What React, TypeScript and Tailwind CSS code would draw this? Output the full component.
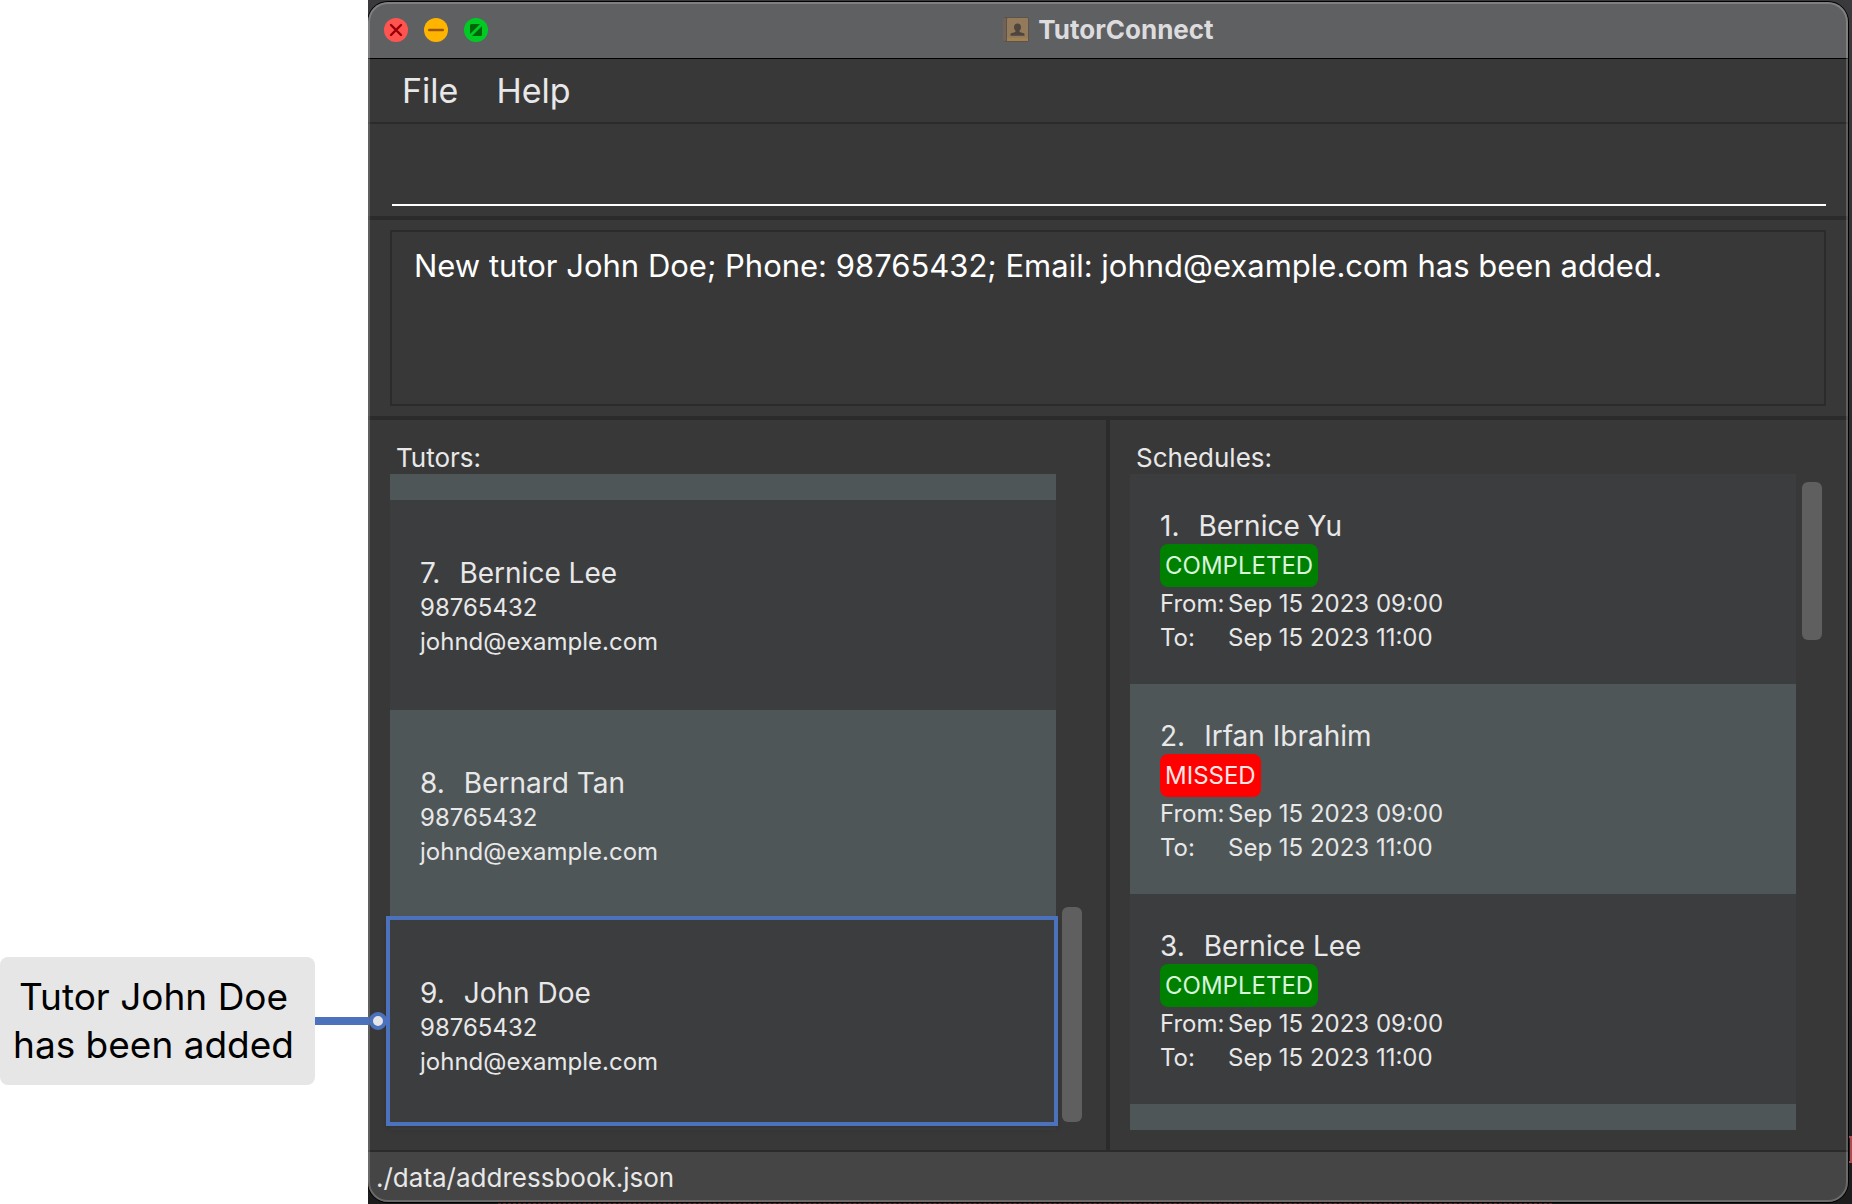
import React from "react";

type Tutor = { id: number; name: string; phone: string; email: string };
type Schedule = { id: number; name: string; status: "COMPLETED" | "MISSED"; from: string; to: string };

const tutors: Tutor[] = [
  { id: 7, name: "Bernice Lee", phone: "98765432", email: "johnd@example.com" },
  { id: 8, name: "Bernard Tan", phone: "98765432", email: "johnd@example.com" },
  { id: 9, name: "John Doe", phone: "98765432", email: "johnd@example.com" },
];

const schedules: Schedule[] = [
  { id: 1, name: "Bernice Yu", status: "COMPLETED", from: "Sep 15 2023 09:00", to: "Sep 15 2023 11:00" },
  { id: 2, name: "Irfan Ibrahim", status: "MISSED", from: "Sep 15 2023 09:00", to: "Sep 15 2023 11:00" },
  { id: 3, name: "Bernice Lee", status: "COMPLETED", from: "Sep 15 2023 09:00", to: "Sep 15 2023 11:00" },
];

function TitleBar() {
  return (
    <header className="grid h-[57px] shrink-0 grid-cols-[1fr_auto_1fr] items-center border-b border-black bg-[#5f6062]">
      <div className="flex gap-4 pl-4">
        <button aria-label="Close" className="size-6">
          <svg viewBox="0 0 24 24" className="size-6">
            <circle cx="12" cy="12" r="12" fill="#ff5450" />
            <path d="M7 7l10 10M17 7L7 17" stroke="#990006" strokeWidth="2.4" strokeLinecap="round" />
          </svg>
        </button>
        <button aria-label="Minimize" className="size-6">
          <svg viewBox="0 0 24 24" className="size-6">
            <circle cx="12" cy="12" r="12" fill="#ffb400" />
            <path d="M5.2 12h13.6" stroke="#9a5700" strokeWidth="2.6" strokeLinecap="round" />
          </svg>
        </button>
        <button aria-label="Zoom" className="size-6">
          <svg viewBox="0 0 24 24" className="size-6">
            <circle cx="12" cy="12" r="12" fill="#00cb25" />
            <path d="M6 16V7.5A1.5 1.5 0 0 1 7.500 6H16zM18 8v8.500A1.500 1.500 0 0 1 16.500 18H8z" fill="#006408" />
          </svg>
        </button>
      </div>
      <div className="flex items-center gap-2">
        <svg viewBox="0 0 28 28" className="size-7">
          <rect x="1" y="1" width="26" height="25" rx="2" fill="#5c5349" />
          <rect x="1" y="2" width="3" height="23" rx="1" fill="#71635a" />
          <rect x="5" y="2" width="21" height="23" rx="1" fill="#937a5b" />
          <rect x="5" y="22" width="21" height="3" fill="#a08252" />
          <path
            d="M15.500 7.500c2.200 0 3.500 1.600 3.500 3.700 0 1.400-.6 2.600-1.400 3.400v1.300l4.200 1.300c.5.200.7.600.7 1v1.500h-14v-1.500c0-.4.200-.8.700-1l4.200-1.300v-1.300c-.8-.8-1.400-2-1.400-3.400 0-2.100 1.300-3.700 3.500-3.700z"
            fill="#4e463e"
          />
        </svg>
        <h1 className="text-[26px] font-bold text-[#dcdcde]">TutorConnect</h1>
      </div>
    </header>
  );
}

function Row({ shaded, children }: { shaded: boolean; children: React.ReactNode }) {
  return (
    <li
      className={
        shaded
          ? "relative flex h-[210px] shrink-0 flex-col justify-center bg-[#4f5658] px-[30px] pt-1"
          : "relative flex h-[210px] shrink-0 flex-col justify-center bg-[#3c3d3f] px-[30px] pt-1"
      }
    >
      {children}
    </li>
  );
}

function Name({ id, name }: { id: number; name: string }) {
  return (
    <h3 className="flex gap-[19px] text-[28px] leading-9">
      <span>{id}.</span>
      <span>{name}</span>
    </h3>
  );
}

function TutorPanel() {
  return (
    <section className="flex min-w-0 flex-1 flex-col border-r-4 border-[#2b2b2b] py-5 pr-5 pl-[22px]">
      <h2 className="h-[34px] px-1.5 text-[26px] leading-9">Tutors:</h2>
      <div className="flex min-h-0 flex-1">
        <ul className="flex min-w-0 flex-1 flex-col">
          <li className="flex-1 bg-[#4f5658]" />
          {tutors.map((t) => (
            <Row key={t.id} shaded={t.id % 2 === 0}>
              <Name id={t.id} name={t.name} />
              <p>{t.phone}</p>
              <p>{t.email}</p>
              {t.id === 9 && (
                <div className="pointer-events-none absolute -top-1 -right-0.5 bottom-1 -left-1 border-4 border-[#4c72be] shadow-md" />
              )}
            </Row>
          ))}
        </ul>
        <div className="mr-1 ml-1.5 flex w-5 flex-col justify-end pb-2">
          <div className="h-[215px] rounded-md bg-[#5f5f5f]" />
        </div>
      </div>
    </section>
  );
}

function SchedulePanel() {
  return (
    <section className="flex min-w-0 flex-1 flex-col py-5 pr-[22px] pl-5">
      <h2 className="h-[34px] px-1.5 text-[26px] leading-9">Schedules:</h2>
      <div className="flex min-h-0 flex-1">
        <ul className="flex min-w-0 flex-1 flex-col">
          {schedules.map((s) => (
            <Row key={s.id} shaded={s.id % 2 === 0}>
              <Name id={s.id} name={s.name} />
              <span
                className={
                  s.status === "COMPLETED"
                    ? "self-start rounded-lg bg-[#008000] px-[5px] leading-[43px] text-[#d8f5dc]"
                    : "self-start rounded-lg bg-[#ff0000] px-[5px] leading-[43px] text-[#ffe6e6]"
                }
              >
                {s.status}
              </span>
              <dl className="grid grid-cols-[68px_auto] justify-start">
                <dt>From:</dt>
                <dd>{s.from}</dd>
                <dt>To:</dt>
                <dd>{s.to}</dd>
              </dl>
            </Row>
          ))}
          <li className="flex-1 bg-[#4f5658]" />
        </ul>
        <div className="mr-1 ml-1.5 w-5 pt-2">
          <div className="h-[158px] rounded-md bg-[#5f5f5f]" />
        </div>
      </div>
    </section>
  );
}

export default function App() {
  return (
    <div className="flex h-screen bg-white font-['Inter',sans-serif] text-[#e8e8e8]">
      <aside className="relative z-10 flex w-[368px] shrink-0 flex-col justify-end pb-[119px]">
        <div className="flex items-center">
          <p className="flex h-32 w-[315px] items-center justify-center rounded-lg bg-[#e6e6e6] pr-2 text-center text-[37px] leading-[48px] text-black">
            Tutor John Doe
            <br />
            has been added
          </p>
          <div className="h-2 flex-1 bg-[#4c72be]" />
          <div className="-mr-[19px] size-[18px] shrink-0 rounded-full border-4 border-[#4c72be] bg-[#e6e6e6]" />
        </div>
      </aside>

      <div className="relative flex min-w-0 flex-1 overflow-hidden bg-linear-to-b from-[#3a3a3c] via-[#262628] to-[#1c1c1d] pt-0.5 pr-1 pb-0.5">
        <div className="absolute right-0 bottom-[41px] h-[27px] w-[3px] border-y-2 border-r-2 border-[#b04a4e]" />
        <div className="absolute right-[300px] bottom-0 left-[130px] border-b border-dashed border-[#6a2b2d]" />
        <main className="relative flex min-w-0 flex-1 flex-col overflow-hidden rounded-[20px] bg-[#383838] text-2xl leading-[34px] shadow-[0_0_0_1px_#000]">
          <TitleBar />
          <nav className="flex h-[65px] shrink-0 items-center gap-[38px] border-b-2 border-[#2b2b2b] pl-[34px] text-[34px] leading-9">
            <button>File</button>
            <button>Help</button>
          </nav>
          <div className="flex h-24 shrink-0 flex-col border-b-4 border-[#2b2b2b] pr-[22px] pb-2.5 pl-6">
            <input
              aria-label="Command"
              className="min-h-0 flex-1 border-b-2 border-white bg-transparent text-[31px] text-white outline-none"
            />
          </div>
          <div className="h-[200px] shrink-0 border-b-4 border-[#2b2b2b] px-[22px] py-2.5">
            <textarea
              readOnly
              aria-label="Result"
              defaultValue="New tutor John Doe; Phone: 98765432; Email: johnd@example.com has been added."
              className="block h-full w-full resize-none border-2 border-[#2b2b2b] bg-transparent px-[22px] py-3.5 text-[31px] leading-10 text-white outline-none"
            />
          </div>
          <div className="flex min-h-0 flex-1">
            <TutorPanel />
            <SchedulePanel />
          </div>
          <footer className="h-[52px] shrink-0 border-t-2 border-[#2b2b2b] bg-[#454545] px-2 pt-1.5 text-[26px] leading-10">
            ./data/addressbook.json
          </footer>
          <div className="pointer-events-none absolute inset-0 rounded-[20px] border-2 border-white/20" />
        </main>
      </div>
    </div>
  );
}
